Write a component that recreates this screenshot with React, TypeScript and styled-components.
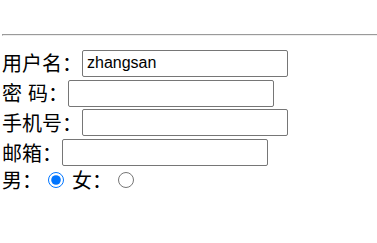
import styled, { createGlobalStyle } from "styled-components";

const GlobalStyle = createGlobalStyle`
  html, body {
    margin: 0;
    padding: 0;
    background: #ffffff;
  }
  body {
    font-family: "Noto Sans CJK SC", "Liberation Sans", sans-serif;
    color: #000000;
  }
`;

const Page = styled.div`
  padding: 34px 0 0 2px;
  overflow: hidden;
`;

const Rule = styled.hr`
  height: 0;
  margin: 0;
  border-style: solid;
  border-width: 1px 0 1px 1px;
  border-color: #9a9a9a transparent #eeeeee #9a9a9a;
  width: 420px;
`;

const Form = styled.form`
  display: flex;
  flex-direction: column;
  margin-top: 12.65px;
`;

const Row = styled.div<{ $h: number }>`
  display: flex;
  align-items: center;
  height: ${(p) => p.$h}px;
`;

const Label = styled.span`
  font-size: 20px;
  line-height: 20px;
  white-space: pre;
  word-spacing: 1.5px;
`;

const TextInput = styled.input`
  box-sizing: border-box;
  width: 206px;
  height: 27px;
  margin: 0;
  padding: 0 4px;
  border: 1px solid #767676;
  border-radius: 2px;
  font-family: "Liberation Sans", Arial, sans-serif;
  font-size: 16px;
  color: #000000;
  outline: none;
`;

const Radio = styled.input`
  width: 16px;
  height: 16px;
  margin: 0 8.5px 0 5.5px;
  accent-color: #0075ff;
`;

const fields = [
  { label: "用户名：", value: "zhangsan" },
  { label: "密 码：", value: "" },
  { label: "手机号：", value: "" },
  { label: "邮箱：", value: "" },
];

function App() {
  return (
    <>
      <GlobalStyle />
      <Page>
        <Rule />
        <Form>
          {fields.map((f) => (
            <Row key={f.label} $h={29.7}>
              <Label>{f.label}</Label>
              <TextInput type="text" defaultValue={f.value} />
            </Row>
          ))}
          <Row $h={25.3}>
            <Label>男：</Label>
            <Radio type="radio" name="sex" defaultChecked />
            <Label>女：</Label>
            <Radio type="radio" name="sex" />
          </Row>
        </Form>
      </Page>
    </>
  );
}

export default App;
